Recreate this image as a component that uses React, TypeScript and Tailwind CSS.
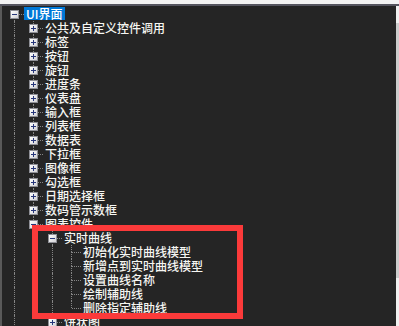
import React from "react";

// Dark Windows-style tree view with a red annotation box over the
// "实时曲线" branch.

type TreeNode = {
  label: string;
  open?: boolean;
  selected?: boolean;
  kids?: TreeNode[];
  collapsed?: boolean; // has children but they are hidden
};

type Row = {
  node: TreeNode;
  guides: boolean[];
  first: boolean;
  hasNext: boolean;
};

const leaf = (label: string): TreeNode => ({ label });
const closed = (label: string): TreeNode => ({ label, collapsed: true });

const tree: TreeNode = {
  label: "UI界面",
  open: true,
  selected: true,
  kids: [
    closed("公共及自定义控件调用"),
    closed("标签"),
    closed("按钮"),
    closed("旋钮"),
    closed("进度条"),
    closed("仪表盘"),
    closed("输入框"),
    closed("列表框"),
    closed("数据表"),
    closed("下拉框"),
    closed("图像框"),
    closed("勾选框"),
    closed("日期选择框"),
    closed("数码管示数框"),
    {
      label: "图表控件",
      open: true,
      kids: [
        {
          label: "实时曲线",
          open: true,
          kids: [
            leaf("初始化实时曲线模型"),
            leaf("新增点到实时曲线模型"),
            leaf("设置曲线名称"),
            leaf("绘制辅助线"),
            leaf("删除指定辅助线"),
          ],
        },
        closed("饼状图"),
      ],
    },
  ],
};

function flatten(node: TreeNode, guides: boolean[], first: boolean, hasNext: boolean, out: Row[]) {
  out.push({ node, guides, first, hasNext });
  if (node.open && node.kids) {
    node.kids.forEach((k, i) => {
      const last = i === node.kids!.length - 1;
      flatten(k, [...guides, hasNext], false, !last, out);
    });
  }
}

const rows: Row[] = [];
// the root has more siblings further down the list
flatten(tree, [], true, true, rows);

function Expander({ open }: { open: boolean }) {
  return (
    <span className="absolute left-[5px] top-[3px] flex h-[9px] w-[9px] items-center justify-center border border-[#8e8f96] bg-gradient-to-br from-white to-[#d2d2d6]">
      <span className="relative flex h-[5px] w-[5px] items-center justify-center">
        <span className="h-[1px] w-[5px] bg-[#26367a]" />
        {!open ? <span className="absolute h-[5px] w-[1px] bg-[#26367a]" /> : null}
      </span>
    </span>
  );
}

function TreeRow({ row }: { row: Row }) {
  const { node, guides, first, hasNext } = row;
  const expandable = node.open || node.collapsed;
  return (
    <div className="flex h-[14px]">
      {guides.map((g, i) => (
        <div key={i} className="flex w-[19px] shrink-0 pl-[9px]">
          {g ? <span className="h-[14px] border-l border-dotted border-[#858585]" /> : null}
        </div>
      ))}
      <div className="relative flex w-[19px] shrink-0 flex-col pl-[9px]">
        <span className={`h-[7px] ${first ? "" : "border-l border-dotted border-[#858585]"}`} />
        <span className="flex h-[7px]">
          <span className={`w-[1px] ${hasNext ? "border-l border-dotted border-[#858585]" : ""}`} />
          <span className="h-0 w-[9px] border-t border-dotted border-[#858585]" />
        </span>
        {expandable ? <Expander open={!!node.open} /> : null}
      </div>
      <span
        className={`h-[13px] whitespace-nowrap px-[2px] text-[12px] font-medium leading-[13px] ${
          node.selected ? "bg-[#0078d7] text-white" : "text-[#f6f6f2]"
        }`}
      >
        {node.label}
      </span>
    </div>
  );
}

export default function App() {
  return (
    <div
      className="relative flex h-[326px] w-[399px] flex-col overflow-hidden bg-[#252525]"
      style={{ fontFamily: '"Noto Sans CJK SC", "Noto Sans", sans-serif' }}
    >
      <div className="h-[4px] shrink-0 bg-[#f3f3f3]" />
      <div className="h-[2px] shrink-0 bg-[#55555f]" />
      <div className="flex min-h-0 flex-1">
        <div className="min-w-0 flex-1 border-l-2 border-[#5a5a5a] pl-[3px] pt-[1px]">
          {rows.map((r, i) => (
            <TreeRow key={i} row={r} />
          ))}
        </div>
        <div className="w-[3px] shrink-0 bg-[#f0f0f0] pt-[17px]">
          <div className="h-[255px] bg-[#cdcdcd]" />
        </div>
      </div>
      {/* annotation */}
      <div className="pointer-events-none absolute left-[32px] top-[225px] h-[94px] w-[211px] border-[6px] border-[#fb3a3a]" />
    </div>
  );
}
